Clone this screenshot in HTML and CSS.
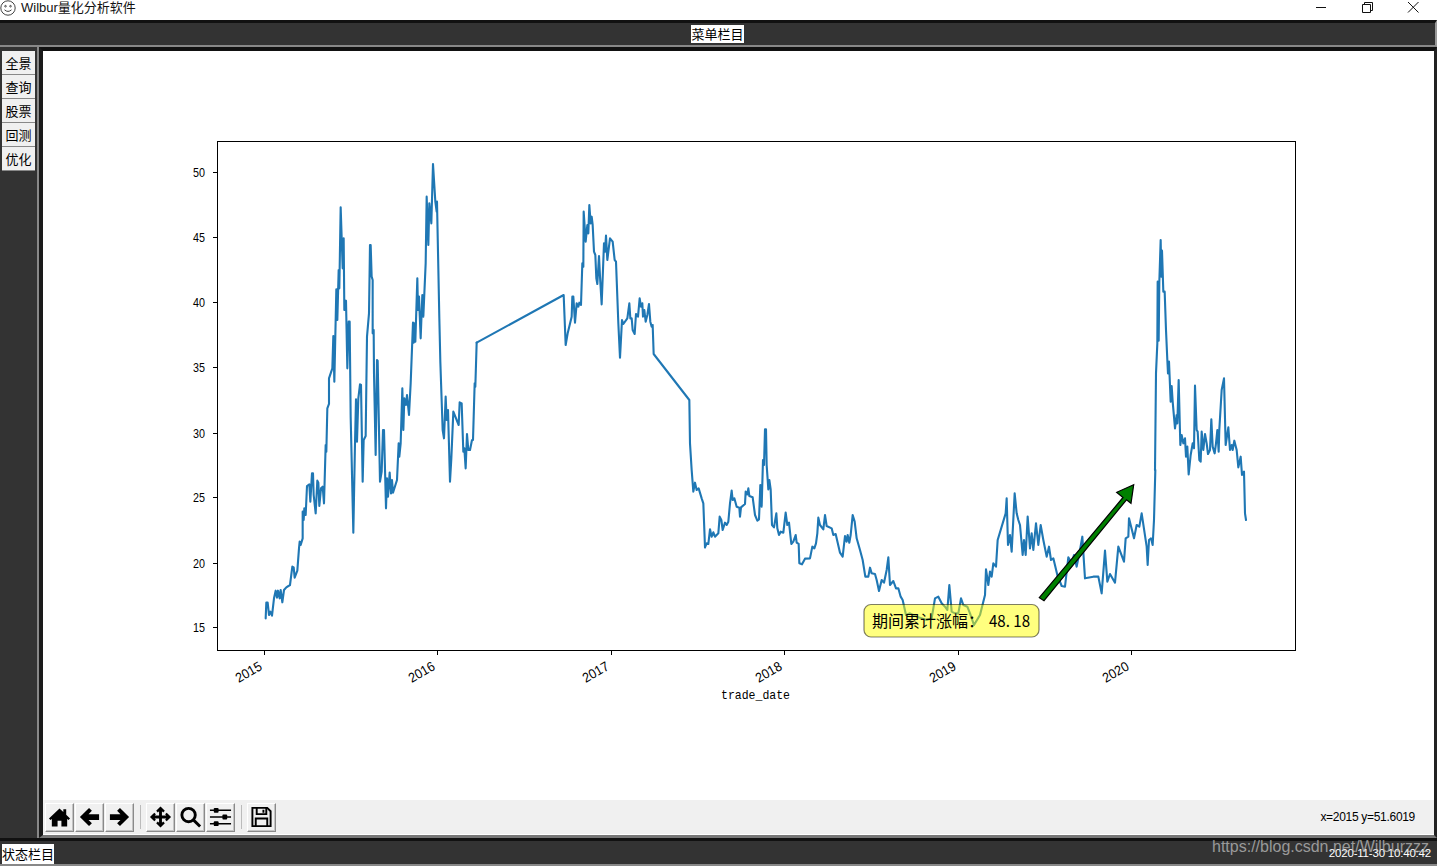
FILE: index.html
```html
<!DOCTYPE html>
<html lang="zh-CN">
<head>
<meta charset="utf-8">
<title>Wilbur量化分析软件</title>
<link rel="stylesheet" href="styles.css">
</head>
<body>
<div class="app">
  <header class="titlebar">
    <svg class="app-icon" viewBox="0 0 16 16"><circle cx="8" cy="8" r="7.200"/><circle cx="5.500" cy="6.200" r=".8"/><circle cx="10.500" cy="6.200" r=".8"/><path d="M4.500 9.800Q8 13 11.500 9.800"/></svg>
    <span class="app-title">Wilbur量化分析软件</span>
    <div class="win-controls">
      <svg class="win-btn" viewBox="0 0 46 20"><path d="M18 7.500H28"/></svg>
      <svg class="win-btn" viewBox="0 0 46 20"><path d="M18.500 4.500h8v8h-8zM20.500 4.500v-2h8v8h-2"/></svg>
      <svg class="win-btn" viewBox="0 0 46 20"><path d="M18 2l10.500 10.500M28.500 2L18 12.500"/></svg>
    </div>
  </header>
  <div class="menubar"><span class="bar-label">菜单栏目</span></div>
  <div class="middle">
    <nav class="sidebar">
      <button class="side-btn">全景</button>
      <button class="side-btn">查询</button>
      <button class="side-btn">股票</button>
      <button class="side-btn">回测</button>
      <button class="side-btn">优化</button>
    </nav>
    <main class="main">
      <svg class="figure" viewBox="43 51 1391 749">
        <rect class="axes" x="217.500" y="141.500" width="1078" height="509"/>
        <path class="tick" d="M213 172.500h4M213 237.500h4M213 302.500h4M213 367.500h4M213 433.500h4M213 497.500h4M213 563.500h4M213 627.500h4M264.500 651v4M437.500 651v4M611.500 651v4M784.500 651v4M958.500 651v4M1131.500 651v4"/>
        <g class="ylabels">
          <text x="205" y="177" textLength="12" lengthAdjust="spacingAndGlyphs">50</text>
          <text x="205" y="242" textLength="12" lengthAdjust="spacingAndGlyphs">45</text>
          <text x="205" y="307" textLength="12" lengthAdjust="spacingAndGlyphs">40</text>
          <text x="205" y="372" textLength="12" lengthAdjust="spacingAndGlyphs">35</text>
          <text x="205" y="438" textLength="12" lengthAdjust="spacingAndGlyphs">30</text>
          <text x="205" y="502" textLength="12" lengthAdjust="spacingAndGlyphs">25</text>
          <text x="205" y="568" textLength="12" lengthAdjust="spacingAndGlyphs">20</text>
          <text x="205" y="632" textLength="12" lengthAdjust="spacingAndGlyphs">15</text>
        </g>
        <g class="xlabels">
          <text transform="translate(263 669) rotate(-30)" textLength="28" lengthAdjust="spacingAndGlyphs">2015</text>
          <text transform="translate(436 669) rotate(-30)" textLength="28" lengthAdjust="spacingAndGlyphs">2016</text>
          <text transform="translate(610 669) rotate(-30)" textLength="28" lengthAdjust="spacingAndGlyphs">2017</text>
          <text transform="translate(783 669) rotate(-30)" textLength="28" lengthAdjust="spacingAndGlyphs">2018</text>
          <text transform="translate(957 669) rotate(-30)" textLength="28" lengthAdjust="spacingAndGlyphs">2019</text>
          <text transform="translate(1130 669) rotate(-30)" textLength="28" lengthAdjust="spacingAndGlyphs">2020</text>
        </g>
        <text class="xtitle" x="755.500" y="699" textLength="69" lengthAdjust="spacingAndGlyphs">trade_date</text>
        <g transform="translate(258 500) scale(.33333)">
          <polyline class="series" points="23,355 25,308 29,308 33,345 37,335 42,347 48,295 53,272 57,293 60,272 65,295 68,270 73,307 78,270 85,262 96,255 103,200 107,202 110,233 118,212 123,145"/>
        </g>
        <g transform="translate(220 150) scale(.33333)">
          <polyline class="series" points="237,1195 239,1175 242,1185 248,1165 248,1085 251,1110 253,1075 257,1095 261,1008 268,1003 271,1055 276,970 279,970 281,1035 287,1090 292,992 295,998 298,1068 303,1015 308,1010 312,1060 317,885 319,905 322,775 327,762 327,685 337,655 340,558 343,695 349,418 352,510 356,360 358,415 362,172 368,355 371,265 373,480 378,452 382,655 386,515 389,515 392,800 395,930 400,1148 405,880 408,748 411,875 415,745 420,703 423,705 428,995 431,870 437,858 441,560 447,490 450,285 452,285 455,380 458,390 458,550 461,540 462,670 467,915 471,630 473,632 480,995 485,965 489,840 492,840 498,1075 501,985 504,1040 509,968 513,1030 516,990 519,1028 531,990 536,880 538,920 542,880 547,715 550,840 553,745 558,765 561,735 567,795 572,700 577,570 579,518 581,578 583,520 586,575 592,385 594,480 597,440 602,565 607,435 610,500 617,340 620,140 625,285 628,160 634,220 639,42 646,155 650,185 651,155 658,505 661,635 668,840 672,865 677,740 680,810 684,780 690,995 694,925 700,785 716,825 719,757 725,760 730,905 733,895 737,955 741,852 745,900 750,900 756,870 759,870 764,700 766,710 770,578"/>
        </g>
        <g transform="translate(470 190) scale(.33333)">
          <polyline class="series" points="20,458 281,315 287,465 293,430 305,380 307,320 310,320 315,398 320,340 325,350 328,338 333,345 337,220 340,230 341,65 347,155 352,105 355,130 358,45 362,100 365,80 368,105 372,185 376,195 379,265 382,282 387,198 390,260 395,343 402,160 405,185 408,137 412,210 420,145 428,155 434,210 438,215 445,400 450,503 456,390 460,402 472,385 478,340 481,385 485,385 488,420 494,432 498,372 504,380 509,325 513,350 517,340 519,380 523,360 527,395 532,375 537,342 541,395 545,410 548,405 551,492 658,630 660,760 665,840 670,905 675,878 680,900 686,895 695,925 700,940 705,1072"/>
        </g>
        <g transform="translate(680 400) scale(.33333)">
          <polyline class="series" points="75,442 80,430 85,432 90,388 95,410 100,397 105,410 110,405 115,400 119,350 124,360 128,390 135,368 140,375 145,365 150,310 155,272 158,300 163,295 170,320 178,323 180,350 183,322 195,312 197,275 202,283 205,265 208,288 218,292 225,345 232,362 237,358 241,255 245,320 249,180 252,195 255,88 258,88 260,195 265,268 268,240 272,268 276,375 282,382 289,340 292,385 297,405 302,395 310,398 317,338 322,375 327,368 334,432 340,425 347,405 350,428 356,432 358,490 366,493 375,476 390,475 397,440 403,445 408,430 412,400 415,353 420,375 430,388 435,345 440,378 455,385 460,405 467,402 480,458 488,470 495,408 500,425 503,405 508,428 512,405 518,345 524,365 530,415 540,450 548,480 556,530 565,530 570,503 575,520 585,522 590,540 597,573 605,540 612,548 620,510 625,472 630,555 640,543 648,565 655,565 662,590 668,600 678,645"/>
        </g>
        <g transform="translate(850 470) scale(.33333)">
          <polyline class="series" points="168,435 180,430 200,440 230,450 245,445 255,385 265,380 275,400 285,410 292,420 298,345 305,425 315,430 325,430 333,385 340,405 352,410 360,430 372,465 390,435 405,375 408,298 415,345 420,305 425,320 430,280 438,290 443,210 467,130 470,85 474,225 480,195 485,245 494,70 500,130 505,150 510,165 518,255 522,210 527,255 533,140 540,235 545,190 550,240 558,160 565,225 572,165 580,210 590,260 597,230 603,270 610,265 622,315 635,348 645,350 655,262 665,280 672,255 680,290 690,240 697,200 705,325 730,320 745,320 755,370 765,242 772,335 780,312 795,338 805,230 822,275 827,205 835,200 837,145 852,205 860,165 868,170 875,130 890,230 893,285 897,210 903,205 908,225 912,150 916,0"/>
        </g>
        <g transform="translate(1100 230) scale(.33333)">
          <polyline class="series" points="165,720 168,430 172,340 173,155 176,332 178,155 182,30 184,140 186,62 190,185 194,185 198,300 202,390 204,430 207,395 212,515 215,468 218,515 225,595 230,555 232,580 236,450 241,645 245,615 250,640 255,625 258,680 262,650 266,733 272,675 278,640 282,655 285,467 290,600 293,605 298,690 302,695 305,605 310,660 315,612 320,640 324,672 330,660 334,568 338,650 344,670 348,640 352,600 356,665 358,598 365,480 372,445 377,645 385,592 390,660 395,645 398,660 403,632 410,660 415,712 422,680 426,735 432,725 435,850 438,870"/>
        </g>
        <rect class="note-box" x="864" y="604.500" width="175" height="32.500" rx="7"/>
        <text class="note-text" x="872" y="627">期间累计涨幅：<tspan x="989" textLength="41" lengthAdjust="spacingAndGlyphs">48. 18</tspan></text>
        <polygon class="arrow" points="1039.300,597.700 1123,497.500 1116.700,492.300 1133.700,484.700 1131,503.300 1126.500,499.800 1044,600.700"/>
      </svg>
      <div class="toolbar">
        <div class="tool-group">
          <button class="tool"><svg viewBox="0 0 24 24"><path class="solid" d="M12 3 1 13.500l1.600 1.700L4 14v8h6v-6h4v6h6v-8l1.400 1.200 1.600-1.700-4-3.800V4h-3v2.900z"/></svg></button>
          <button class="tool"><svg viewBox="0 0 24 24"><path class="solid" d="M2 12l9.500-9.500 3 3L11 9h11v6H11l3.500 3.500-3 3z"/></svg></button>
          <button class="tool"><svg viewBox="0 0 24 24"><path class="solid" d="M22 12l-9.500-9.500-3 3L13 9H2v6h11l-3.500 3.500 3 3z"/></svg></button>
        </div>
        <span class="tool-sep"></span>
        <div class="tool-group">
          <button class="tool"><svg viewBox="0 0 24 24"><path class="solid" d="M12 1l4.500 4.500-1.700 1.700L13.500 6v4.500H18l-1.200-1.300 1.700-1.700L23 12l-4.500 4.500-1.700-1.700 1.200-1.300h-4.500V18l1.300-1.200 1.700 1.700L12 23l-4.500-4.500 1.700-1.700 1.300 1.200v-4.500H6l1.200 1.300-1.700 1.700L1 12l4.500-4.500 1.700 1.700L6 10.500h4.500V6L9.200 7.200 7.500 5.500z"/></svg></button>
          <button class="tool"><svg viewBox="0 0 24 24"><circle class="hollow" cx="10" cy="10" r="7"/><path class="hollow" d="M15 15l7 7"/></svg></button>
          <button class="tool"><svg viewBox="0 0 24 24"><path class="thin" d="M1 5h22M1 12h22M1 19h22"/><rect class="solid" x="5" y="2.500" width="5" height="5" rx="1"/><rect class="solid" x="14" y="9.500" width="5" height="5" rx="1"/><rect class="solid" x="5" y="16.500" width="5" height="5" rx="1"/></svg></button>
        </div>
        <span class="tool-sep"></span>
        <button class="tool"><svg viewBox="0 0 24 24"><path class="outline" d="M2.500 2.500H18l3.500 3.500v15.500h-19z"/><path class="outline" d="M7 2.500v6.500h10V2.500M14 4.500v3M6 21.500v-8h12v8"/></svg></button>
        <span class="coords">x=2015 y=51.6019</span>
      </div>
    </main>
  </div>
  <footer class="statusbar">
    <span class="bar-label status-label">状态栏目</span>
    <span class="clock">2020-11-30 10:40:42</span>
    <span class="watermark">https://blog.csdn.net/Wilburzzz</span>
  </footer>
</div>
</body>
</html>
```
FILE: styles.css
```css
* { box-sizing: border-box; }
html, body { margin: 0; padding: 0; }
body { width: 1437px; height: 866px; overflow: hidden; background: #fff; font-family: "Noto Sans CJK SC", "Liberation Sans", sans-serif; }
.app { display: flex; flex-direction: column; height: 866px; }

.titlebar { height: 20px; flex: none; display: flex; align-items: flex-start; background: #fff; }
.app-icon { width: 16px; height: 16px; flex: none; fill: none; stroke: #444; stroke-width: 1; }
.app-title { margin-left: 5px; font: 13px/16px "Liberation Sans", "Noto Sans CJK SC", sans-serif; color: #111; }
.win-controls { margin-left: auto; display: flex; padding-right: 1px; }
.win-btn { width: 46px; height: 20px; fill: none; stroke: #111; stroke-width: 1; }

.menubar { height: 27px; flex: none; display: flex; justify-content: center; align-items: center; background: #333; border-top: 3px solid #111; border-bottom: 2px solid #888; border-right: 2px solid #999; }
.bar-label { background: #fff; color: #000; font-size: 13px; line-height: 18px; height: 18px; white-space: nowrap; }

.middle { flex: 1; display: flex; min-height: 0; }
.sidebar { width: 39px; flex: none; display: flex; flex-direction: column; padding: 4px 2px 0 2px; background: #333; border-right: 2px solid #888; }
.side-btn { width: 33px; height: 24px; flex: none; padding: 0; margin: 0; border: 0; border-bottom: 1px solid #888; background: #f0f0f0; color: #000; font: 13px/20px "Noto Sans CJK SC", sans-serif; }

.main { flex: 1; min-width: 0; display: flex; flex-direction: column; background: #fff; border-left: 4px solid #1a1a1a; border-top: 4px solid #111; border-right: 3px solid #222; border-bottom: 3px solid #777; }
.figure { display: block; width: 1391px; height: 749px; flex: none; }
.axes { fill: #fff; stroke: #000; stroke-width: 1; }
.tick { fill: none; stroke: #000; stroke-width: 1; }
.ylabels text { font: 13.500px "Liberation Sans", sans-serif; text-anchor: end; fill: #000; }
.xlabels text { font: 13.500px "Liberation Sans", sans-serif; text-anchor: end; fill: #000; }
.xtitle { font: 13.500px "Liberation Mono", monospace; text-anchor: middle; fill: #000; }
.series { fill: none; stroke: #1f77b4; stroke-width: 2.100; stroke-linejoin: round; stroke-linecap: round; vector-effect: non-scaling-stroke; }
.note-box { fill: rgba(255, 255, 0, .5); stroke: rgba(0, 0, 0, .5); stroke-width: 1.200; }
.note-text { font: 16px "Noto Sans CJK SC", sans-serif; fill: #000; }
.arrow { fill: #008000; stroke: #000; stroke-width: 1.200; stroke-linejoin: miter; }

.toolbar { height: 34px; flex: none; display: flex; align-items: center; padding: 0 19px 0 2px; background: #f0f0f0; }
.tool-group { display: flex; gap: 1px; }
.tool { width: 29px; height: 29px; padding: 2px; margin: 0; display: flex; align-items: center; justify-content: center; background: #f0f0f0; border: 1px solid; border-color: #fff #8a8a8a #8a8a8a #fff; box-shadow: inset -1px -1px 0 #c4c4c4; }
.tool svg { width: 24px; height: 24px; display: block; }
.solid { fill: #000; }
.hollow { fill: none; stroke: #000; stroke-width: 3; }
.thin { fill: none; stroke: #000; stroke-width: 1.500; }
.outline { fill: none; stroke: #000; stroke-width: 2; }
.tool-sep { width: 1px; height: 24px; margin: 0 5px 0 6px; background: #bbb; }
.coords { margin-left: auto; font: 12px "Liberation Sans", sans-serif; letter-spacing: -.3px; color: #000; }

.statusbar { position: relative; height: 28px; flex: none; display: flex; align-items: center; justify-content: space-between; padding: 2px 6px 0 2px; background: #333; border-top: 3px solid #111; border-bottom: 2px solid #888; }
.status-label { height: 20px; line-height: 20px; }
.clock { font: 11.500px "Liberation Sans", sans-serif; color: #fff; margin-bottom: 1px; letter-spacing: -.2px; }
.watermark { position: absolute; left: 1212px; top: -3px; font: 16px "Liberation Sans", sans-serif; color: rgba(200, 200, 200, .7); white-space: nowrap; }
```
